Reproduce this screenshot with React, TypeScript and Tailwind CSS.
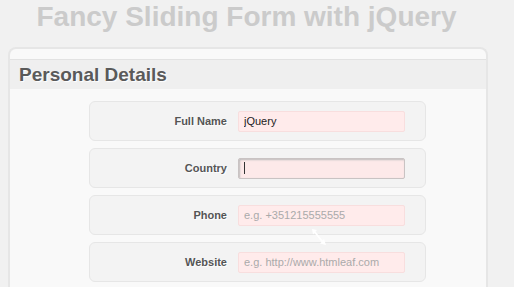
export default function App() {
  const rows = [
    { label: 'Full Name', value: 'jQuery', placeholder: '' },
    { label: 'Country', value: '', placeholder: '', focused: true },
    { label: 'Phone', value: '', placeholder: 'e.g. +351215555555' },
    { label: 'Website', value: '', placeholder: 'e.g. http://www.htmleaf.com' },
  ]

  return (
    <div className="h-[287px] overflow-hidden bg-[#f1f1f1] font-['Liberation_Sans',Arial,sans-serif]">
      {/* Title */}
      <div className="w-[493px] pt-[1px] mb-[14px]">
        <h1 className="text-center text-[28px] leading-[32px] font-bold text-[#cbcbcb]">
          Fancy Sliding Form with jQuery
        </h1>
      </div>

      {/* Form box */}
      <div className="relative ml-[8px] w-[480px] h-[260px] rounded-t-[8px] border-2 border-b-0 border-[#e6e6e6] bg-[#f9f9f9]">
        <div className="mt-[10px] h-[30px] border-t border-[#e2e2e2] bg-[#efefef] pl-[9px]">
          <h2 className="text-[19px] leading-[29px] font-bold text-[#5a5a5a] [text-shadow:1px_1px_1px_#fff]">
            Personal Details
          </h2>
        </div>

        <div className="flex flex-col gap-[7px] pl-[79px] pt-[12px]">
          {rows.map((r) => (
            <div
              key={r.label}
              className="flex h-[40px] w-[337px] items-center rounded-[6px] border border-[#e6e6e6] bg-[#f3f3f3]"
            >
              <div className="w-[148px] pr-[11px] text-right text-[11px] font-bold text-[#555] [text-shadow:1px_1px_1px_#fff]">
                {r.label}
              </div>
              {r.focused ? (
                <div className="flex h-[21px] w-[167px] items-center rounded-[2px] border border-[#c9c3c3] bg-[#fde9e9] pl-[5px] shadow-[inset_1px_1px_2px_#bbb]">
                  <span className="h-[12px] w-[1px] bg-[#333]" />
                </div>
              ) : (
                <input
                  readOnly
                  defaultValue={r.value}
                  placeholder={r.placeholder}
                  className="h-[21px] w-[167px] rounded-[2px] border border-[#f8dede] bg-[#ffebeb] px-[5px] text-[11px] text-[#222] outline-none placeholder:text-[#aaaaaa]"
                />
              )}
            </div>
          ))}
        </div>

        {/* mouse resize cursor */}
        <svg
          className="absolute left-[301px] top-[179px]"
          width="16"
          height="18"
          viewBox="0 0 16 18"
        >
          <path
            d="M1 1 L6 2 L4.5 3.5 L11.5 12.5 L13 11 L15 17 L9 15.5 L10.5 14 L3.5 5 L2 6.5 Z"
            fill="#fff"
          />
        </svg>
      </div>
    </div>
  )
}
